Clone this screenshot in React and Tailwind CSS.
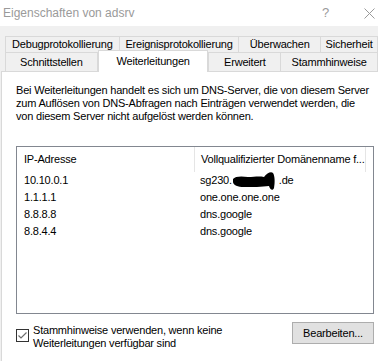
import React from 'react';

const tabsTop = [
  { label: 'Debugprotokollierung', w: 'w-[115px]' },
  { label: 'Ereignisprotokollierung', w: 'w-[121px]' },
  { label: 'Überwachen', w: 'w-[83px]' },
  { label: 'Sicherheit', w: 'w-[58px]' },
];

const forwarders = [
  { ip: '10.10.0.1', name: 'sg230.', redacted: true },
  { ip: '1.1.1.1', name: 'one.one.one.one' },
  { ip: '8.8.8.8', name: 'dns.google' },
  { ip: '8.8.4.4', name: 'dns.google' },
];

const Tab = ({ label, w, active }) => {
  if (active) {
    return (
      <div className={`${w} h-[22px] -mt-[2px] -mb-[1px] z-10 bg-white border border-b-0 border-[#d9d9d9] flex items-center justify-center`}>
        {label}
      </div>
    );
  }
  return (
    <div className={`${w} h-full bg-[#f0f0f0] border border-[#d9d9d9] -ml-px first:ml-0 flex items-center justify-center`}>
      {label}
    </div>
  );
};

const App = () => {
  return (
    <div className="w-[378px] h-[361px] overflow-hidden bg-[#f0f0f0] text-[11px] tracking-[-0.2px] text-black font-['Liberation_Sans',Arial,sans-serif] flex flex-col">
      {/* title bar */}
      <div className="h-[26px] bg-white flex items-center shrink-0">
        <span className="pl-[3px] text-[12px] tracking-normal text-[#9a9a9a]">Eigenschaften von adsrv</span>
        <span className="ml-auto w-[10px] text-[13px] text-[#9a9a9a] mr-[32px]">?</span>
        <svg width="11" height="11" viewBox="0 0 11 11" className="mr-[3px]">
          <path d="M0.5 0.5 L10.5 10.5 M10.5 0.5 L0.5 10.5" stroke="#9a9a9a" strokeWidth="1" />
        </svg>
      </div>

      {/* tabs */}
      <div className="pt-[10px] shrink-0 whitespace-nowrap">
        <div className="flex h-[17px] ml-[5px]">
          {tabsTop.map((t) => (
            <Tab key={t.label} {...t} />
          ))}
        </div>
        <div className="flex h-[20px] ml-[5px] -mt-px items-start">
          <div className="w-[93px] h-full bg-[#f0f0f0] border border-[#d9d9d9] flex items-center justify-center">Schnittstellen</div>
          <Tab label="Weiterleitungen" w="w-[111px]" active />
          <div className="w-[73px] h-full bg-[#f0f0f0] border border-[#d9d9d9] flex items-center justify-center">Erweitert</div>
          <div className="w-[97px] h-full bg-[#f0f0f0] border border-l-0 border-[#d9d9d9] flex items-center justify-center">Stammhinweise</div>
        </div>
      </div>

      {/* panel */}
      <div className="flex-1 ml-[1px] -mt-px bg-white border-l border-t border-[#d9d9d9] pl-[14px] pr-[5px]">
        <p className="pt-[12px] leading-[13px] w-[358px]">
          Bei Weiterleitungen handelt es sich um DNS-Server, die von diesem Server zum Auflösen von DNS-Abfragen nach Einträgen verwendet werden, die von diesem Server nicht aufgelöst werden können.
        </p>

        <div className="mt-[23px] w-[358px] h-[168px] border border-[#828790] bg-white">
          <div className="flex h-[25px] items-center whitespace-nowrap">
            <div className="w-[177px] pl-[7px]">IP-Adresse</div>
            <div className="w-[172px] h-full border-l border-r border-[#e5e5e5] pl-[6px] flex items-center overflow-hidden">
              Vollqualifizierter Domänenname f...
            </div>
          </div>
          {forwarders.map((f) => (
            <div key={f.ip} className="flex h-[17px] items-center whitespace-nowrap">
              <div className="w-[177px] pl-[7px]">{f.ip}</div>
              <div className="pl-[6px] flex items-center">
                {f.name}
                {f.redacted && (
                  <>
                    <svg width="47" height="20" viewBox="0 0 47 20" className="-my-[2px]">
                      <path
                        d="M1 8 C3 5 10 5 16 6 C22 6 27 5 32 6 C35 2 39 0 41 2 C43 5 43 12 42 17 C41 20 38 19 37 15 C30 16 20 16 12 16 C6 16 1 14 1 11 Z"
                        fill="#000"
                      />
                    </svg>
                    <span>.de</span>
                  </>
                )}
              </div>
            </div>
          ))}
        </div>

        <div className="mt-[8px] flex items-start w-[358px]">
          <div className="mt-[2px] flex items-start">
            <div className="w-[13px] h-[13px] mt-[5px] border border-[#333333] bg-white flex items-center justify-center shrink-0">
              <svg width="11" height="11" viewBox="0 0 11 11">
                <path d="M1.5 5.5 L4 8 L9.5 2.5" stroke="#6d6d6d" strokeWidth="1.2" fill="none" />
              </svg>
            </div>
            <div className="ml-[4px] leading-[13px]">
              Stammhinweise verwenden, wenn keine
              <br />
              Weiterleitungen verfügbar sind
            </div>
          </div>
          <button className="ml-auto w-[82px] h-[22px] bg-[#e1e1e1] border border-[#adadad] text-[11px] flex items-center justify-center">
            Bearbeiten...
          </button>
        </div>

        <p className="mt-[9px] leading-[13px] whitespace-nowrap">
          Hinweis: Wenn bedingte Weiterleitungen für bestimmte Domänen definiert sind
        </p>
      </div>
    </div>
  );
};

export default App;
